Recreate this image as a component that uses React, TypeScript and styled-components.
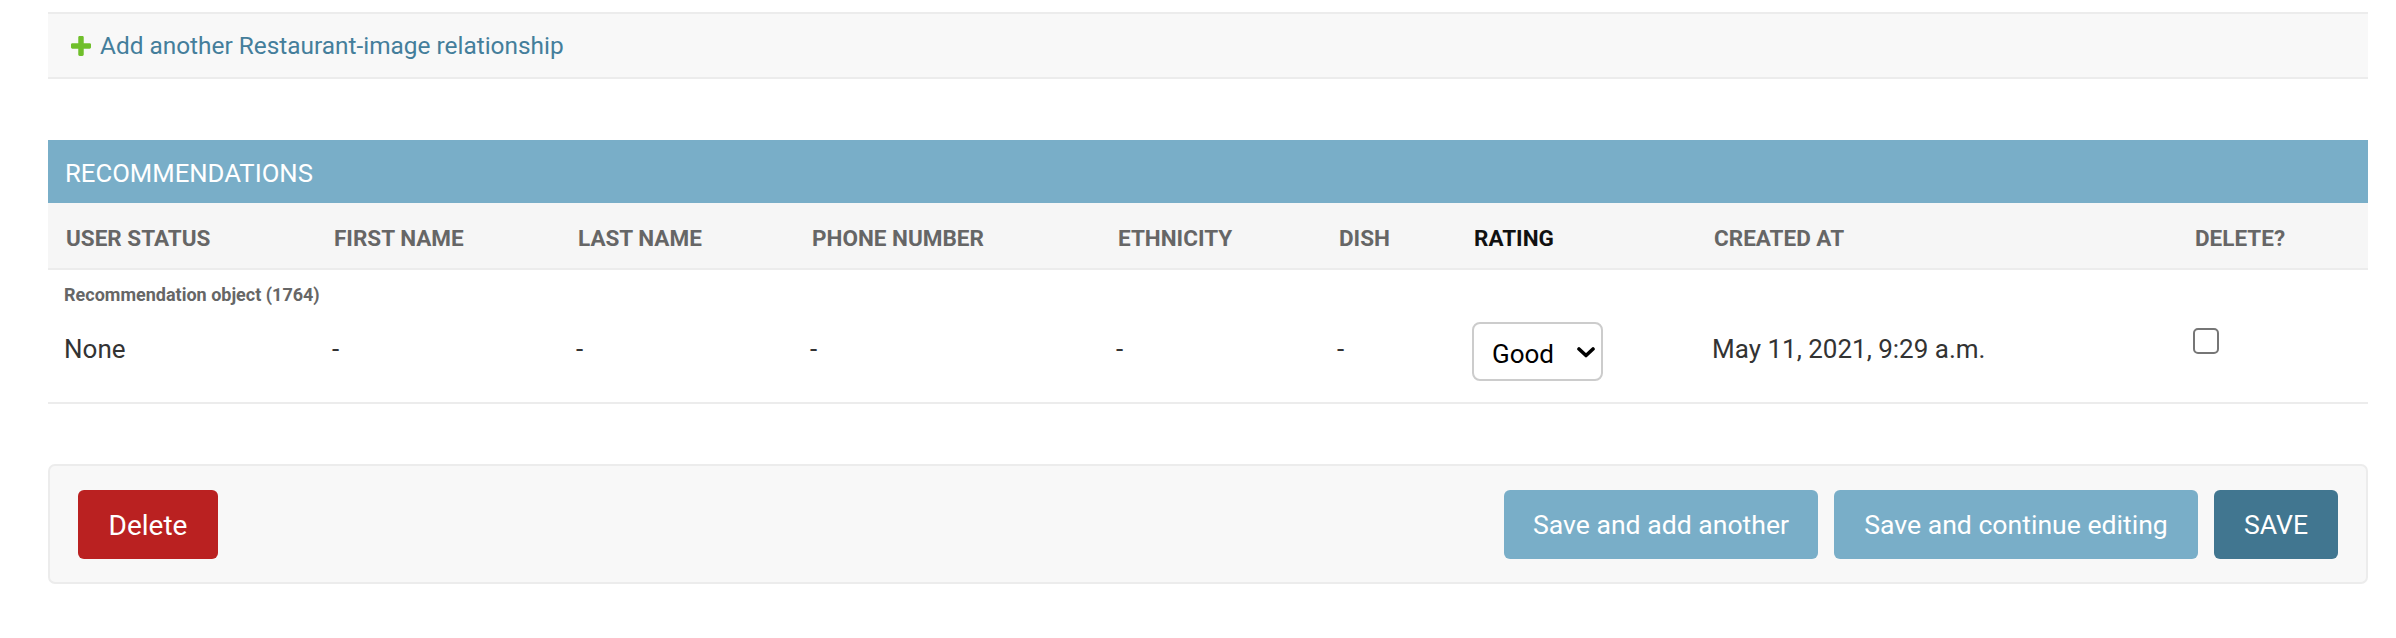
import React from "react";
import styled, { createGlobalStyle } from "styled-components";

const GlobalStyle = createGlobalStyle`
  html, body {
    margin: 0;
    padding: 0;
    background: #fff;
    font-family: Roboto, "Liberation Sans", sans-serif;
    color: #333;
  }
  * { box-sizing: border-box; }
`;

const Page = styled.div`
  padding: 12px 28px 0 48px;
  width: 2396px;
`;

const AddRowBar = styled.div`
  display: flex;
  align-items: center;
  gap: 9px;
  height: 67px;
  padding-left: 23px;
  background: #f8f8f8;
  border-top: 2px solid #ececec;
  border-bottom: 2px solid #ececec;
`;

const AddLink = styled.a`
  font-size: 24.4px;
  color: #447e9b;
  text-decoration: none;
  line-height: 30px;
`;

const Module = styled.section`
  margin-top: 61px;
`;

const Caption = styled.h2`
  margin: 0;
  height: 63px;
  display: flex;
  align-items: center;
  padding: 2px 0 0 17px;
  background: #79aec8;
  color: #fff;
  font-size: 25.7px;
  font-weight: 400;
  text-transform: uppercase;
`;

const COLS = "268px 244px 234px 306px 221px 135px 240px 481px 191px";

const HeaderRow = styled.div`
  display: grid;
  grid-template-columns: ${COLS};
  height: 67px;
  padding-top: 5px;
  align-items: center;
  background: #f6f6f6;
  border-bottom: 2px solid #ececec;
`;

const Th = styled.div<{ $required?: boolean }>`
  padding: 0 0 0 18px;
  font-size: 22.5px;
  font-weight: 700;
  text-transform: uppercase;
  color: ${(p) => (p.$required ? "#111" : "#666")};
`;

const DataRow = styled.div`
  padding: 14px 0 21px;
  border-bottom: 2px solid #ececec;
`;

const OriginalLabel = styled.p`
  margin: 0 0 17px 16px;
  font-size: 18px;
  line-height: 21px;
  font-weight: 700;
  color: #666;
`;

const CellsGrid = styled.div`
  display: grid;
  grid-template-columns: ${COLS};
  align-items: start;
  height: 59px;
`;

const TextCell = styled.div`
  padding: 11px 0 0 16px;
  font-size: 26px;
  line-height: 32px;
  color: #333;
`;

const SelectCell = styled.div`
  padding-left: 16px;
`;

const SelectWrap = styled.div`
  position: relative;
  width: 131px;
  height: 59px;
`;

const Select = styled.select`
  appearance: none;
  -webkit-appearance: none;
  width: 100%;
  height: 100%;
  padding: 5px 0 0 18px;
  border: 2px solid #cccccc;
  border-radius: 8px;
  background: #fff;
  font-family: Roboto, "Liberation Sans", sans-serif;
  font-size: 26px;
  color: #000;
`;

const Chevron = styled.svg`
  position: absolute;
  right: 8px;
  top: 25px;
  pointer-events: none;
`;

const CheckCell = styled.div`
  padding: 6px 0 0 16px;
`;

const Checkbox = styled.input`
  appearance: none;
  -webkit-appearance: none;
  margin: 0;
  width: 26px;
  height: 26px;
  border: 2px solid #767676;
  border-radius: 5px;
  background: #fff;
`;

const SubmitRow = styled.div`
  margin-top: 60px;
  display: flex;
  align-items: center;
  gap: 16px;
  height: 120px;
  padding: 0 28px;
  background: #f8f8f8;
  border: 2px solid #ececec;
  border-radius: 7px;
`;

type Variant = "delete" | "secondary" | "primary";

const Button = styled.button<{ $variant: Variant; $width: number }>`
  width: ${(p) => p.$width}px;
  height: 69px;
  padding: ${(p) => (p.$variant === "delete" ? "2px 0 0" : "0")};
  border: none;
  border-radius: 6px;
  font-family: Roboto, "Liberation Sans", sans-serif;
  font-size: ${(p) => (p.$variant === "delete" ? "28px" : "26.6px")};
  color: #fff;
  background: ${(p) =>
    p.$variant === "delete" ? "#ba2121" : p.$variant === "primary" ? "#417690" : "#79aec8"};
  text-transform: ${(p) => (p.$variant === "primary" ? "uppercase" : "none")};
`;

const Spacer = styled.div`
  flex: 1;
`;

const PlusIcon = () => (
  <svg width="20" height="20" viewBox="192 192 1408 1408">
    <path
      fill="#70bf2b"
      d="M1600 796v192q0 40-28 68t-68 28h-416v416q0 40-28 68t-68 28h-192q-40 0-68-28t-28-68v-416h-416q-40 0-68-28t-28-68v-192q0-40 28-68t68-28h416v-416q0-40 28-68t68-28h192q40 0 68 28t28 68v416h416q40 0 68 28t28 68z"
    />
  </svg>
);

const headers = [
  { label: "User status" },
  { label: "First name" },
  { label: "Last name" },
  { label: "Phone number" },
  { label: "Ethnicity" },
  { label: "Dish" },
  { label: "Rating", required: true },
  { label: "Created at" },
  { label: "Delete?" },
];

export default function App() {
  return (
    <>
      <GlobalStyle />
      <Page>
        <AddRowBar>
          <PlusIcon />
          <AddLink href="#">Add another Restaurant-image relationship</AddLink>
        </AddRowBar>

        <Module>
          <Caption>Recommendations</Caption>
          <HeaderRow>
            {headers.map((h) => (
              <Th key={h.label} $required={h.required}>
                {h.label}
              </Th>
            ))}
          </HeaderRow>
          <DataRow>
            <OriginalLabel>Recommendation object (1764)</OriginalLabel>
            <CellsGrid>
              <TextCell>None</TextCell>
              <TextCell>-</TextCell>
              <TextCell>-</TextCell>
              <TextCell>-</TextCell>
              <TextCell>-</TextCell>
              <TextCell>-</TextCell>
              <SelectCell>
                <SelectWrap>
                  <Select defaultValue="good">
                    <option value="good">Good</option>
                    <option value="bad">Bad</option>
                  </Select>
                  <Chevron width="18" height="11" viewBox="0 0 18 11">
                    <path d="M2 2 L9 8.5 L16 2" fill="none" stroke="#000" strokeWidth="3.6" strokeLinecap="round" strokeLinejoin="round" />
                  </Chevron>
                </SelectWrap>
              </SelectCell>
              <TextCell>May 11, 2021, 9:29 a.m.</TextCell>
              <CheckCell>
                <Checkbox type="checkbox" />
              </CheckCell>
            </CellsGrid>
          </DataRow>
        </Module>

        <SubmitRow>
          <Button $variant="delete" $width={140}>Delete</Button>
          <Spacer />
          <Button $variant="secondary" $width={314}>Save and add another</Button>
          <Button $variant="secondary" $width={364}>Save and continue editing</Button>
          <Button $variant="primary" $width={124}>Save</Button>
        </SubmitRow>
      </Page>
    </>
  );
}
